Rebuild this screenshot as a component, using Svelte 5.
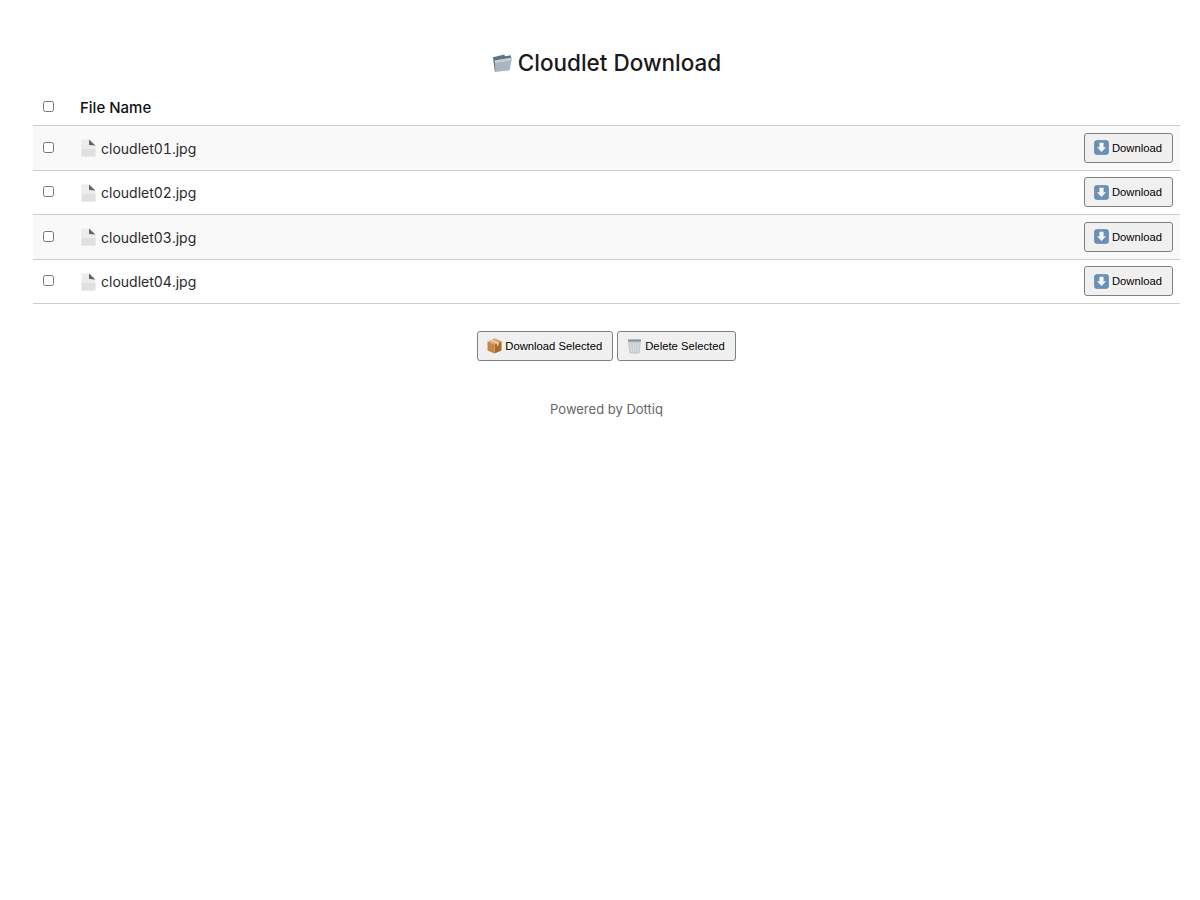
<script>
  const files = ['cloudlet01.jpg', 'cloudlet02.jpg', 'cloudlet03.jpg', 'cloudlet04.jpg'];
</script>

{#snippet downloadIcon()}
  <svg class="emoji" width="15" height="15" viewBox="0 0 16 16">
    <rect x="0.5" y="0.5" width="15" height="15" rx="2.5" fill="#6a90b8" stroke="#56799c" stroke-width="0.6" />
    <path d="M5.800 3h4.400v4.600h2.600L8 12.800 3.200 7.600h2.600z" fill="#f4f7fa" />
  </svg>
{/snippet}

{#snippet fileIcon()}
  <svg class="file-icon" width="16" height="18" viewBox="0 0 16 18">
    <path d="M1.500 0.500h7.500l6.500 6v11h-14z" fill="#ececec" />
    <path d="M9 0.500v5.500l6.500 0.600z" fill="#666" />
    <path d="M1.500 10h14v7.500h-14z" fill="#dcdcdc" opacity="0.7" />
  </svg>
{/snippet}

<main class="page">
  <h1 class="title">
    <svg class="folder" width="21" height="20" viewBox="0 0 22 20">
      <path d="M1 4l12-3 .5 2 6-1 .8 3L3 19.500z" fill="#5e7387" />
      <path d="M3 7.500l18-3-2.500 13L3.500 19.500z" fill="#a9b6c0" />
      <path d="M3 7.500l18-3-.5 2.500L3.200 10z" fill="#c6d0d8" />
    </svg>
    Cloudlet Download
  </h1>

  <table class="files">
    <thead>
      <tr>
        <th class="check"><input type="checkbox" /></th>
        <th>File Name</th>
        <th></th>
      </tr>
    </thead>
    <tbody>
      {#each files as file}
        <tr>
          <td class="check"><input type="checkbox" /></td>
          <td><span class="file">{@render fileIcon()}{file}</span></td>
          <td class="action">
            <button class="btn">{@render downloadIcon()}Download</button>
          </td>
        </tr>
      {/each}
    </tbody>
  </table>

  <div class="actions">
    <button class="btn">
      <svg class="emoji" width="15" height="16" viewBox="0 0 15 16">
        <path d="M7.500 0.500L14.500 3.500v9L7.500 15.500z" fill="#a86a32" />
        <path d="M7.500 6.500v9L0.500 12.500v-9z" fill="#c58547" />
        <path d="M0.500 3.500l7-3 7 3-7 3z" fill="#dca56b" />
        <path d="M3 2.400l7 3v2.500l1.600-.7V4.700l-7-3z" fill="#f0d9b8" />
      </svg>Download Selected
    </button>
    <button class="btn">
      <svg class="emoji" width="15" height="16" viewBox="0 0 15 16">
        <path d="M1 1.500h13v2L12.500 15.500h-10L1 3.500z" fill="#c4cbcf" />
        <path d="M1 1.500h13v2H1z" fill="#8b9398" />
        <path d="M3.500 5l1 9M6.200 5l.4 9M8.800 5l-.4 9M11.500 5l-1 9" stroke="#e4e8ea" stroke-width="0.8" fill="none" />
      </svg>Delete Selected
    </button>
  </div>

  <p class="footer">Powered by Dottiq</p>
</main>

<style>
  :global(body) {
    background: #fff;
  }

  .page {
    padding: 48px 20px 0 33px;
    font-family: Inter, "Liberation Sans", sans-serif;
    color: #222;
  }

  .title {
    display: flex;
    justify-content: center;
    align-items: center;
    gap: 5px;
    margin: 0 0 17px;
    font-size: 22.500px;
    line-height: 29px;
    font-weight: 500;
    color: #1a1a1a;
  }

  .folder {
    margin-top: 1px;
  }

  .files {
    width: 100%;
    border-collapse: collapse;
    font-size: 14px;
    font-variant-numeric: tabular-nums;
  }

  th {
    height: 26px;
    padding: 0 7px 5px 0;
    text-align: left;
    font-size: 15px;
    font-weight: 500;
    color: #111;
    border-bottom: 1px solid #ccc;
  }

  td {
    height: 43.500px;
    padding: 0 7px 0 0;
    border-bottom: 1px solid #ccc;
  }

  tbody tr:nth-child(odd) {
    background: #f9f9f9;
  }

  .check {
    width: 37px;
    padding: 0 0 0 10px;
    text-align: left;
    vertical-align: middle;
  }

  th.check {
    padding-bottom: 5px;
  }

  .check input {
    display: block;
    width: 11px;
    height: 11px;
    margin: 0 0 1px;
  }

  .file {
    display: flex;
    align-items: center;
    gap: 5px;
    padding-top: 1px;
    color: #2a2a2a;
  }

  .file-icon {
    flex: none;
  }

  .action {
    text-align: right;
  }

  .btn {
    display: inline-flex;
    align-items: center;
    gap: 3px;
    height: 30px;
    padding: 0 10px 0 9px;
    border: 1px solid #808080;
    border-radius: 3px;
    background: #f0f0f0;
    color: #000;
    font-family: "Liberation Sans", Arial, sans-serif;
    font-size: 11.250px;
  }

  .actions {
    display: flex;
    justify-content: center;
    gap: 4px;
    margin-top: 27px;
  }

  .actions .btn {
    height: 29.500px;
  }

  .footer {
    margin: 40.500px 0 0;
    text-align: center;
    font-size: 13px;
    line-height: 16px;
    color: #666;
  }
</style>
